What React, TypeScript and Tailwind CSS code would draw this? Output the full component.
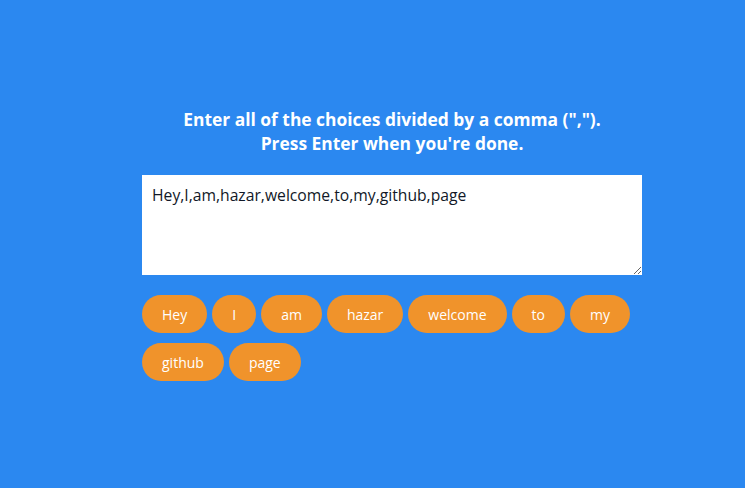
import React, { useState } from 'react';

const App: React.FC = () => {
  const [text, setText] = useState('Hey,I,am,hazar,welcome,to,my,github,page');

  const tags = text
    .split(',')
    .filter((t) => t.trim() !== '')
    .map((t) => t.trim());

  return (
    <div className="flex h-screen w-full items-center justify-center bg-[#2b88f0] pl-[39px] font-['Open_Sans',sans-serif]">
      <div className="w-[500px]">
        <h3 className="mb-[20px] text-center text-[17.4px] font-bold leading-[24px] text-white">
          Enter all of the choices divided by a comma (",").
          <br />
          Press Enter when you're done.
        </h3>
        <textarea
          value={text}
          onChange={(e) => setText(e.target.value)}
          className="block h-[100px] w-full bg-white p-[10px] text-[15.7px] leading-[20px] text-[#111827] outline-none"
        />
        <div className="mt-[20px] flex flex-wrap gap-x-[5px] gap-y-[10px]">
          {tags.map((tag, i) => (
            <span
              key={i}
              className="flex h-[38px] items-center rounded-[50px] bg-[#f0932b] px-[20px] text-[14px] text-white"
            >
              {tag}
            </span>
          ))}
        </div>
      </div>
    </div>
  );
};

export default App;
